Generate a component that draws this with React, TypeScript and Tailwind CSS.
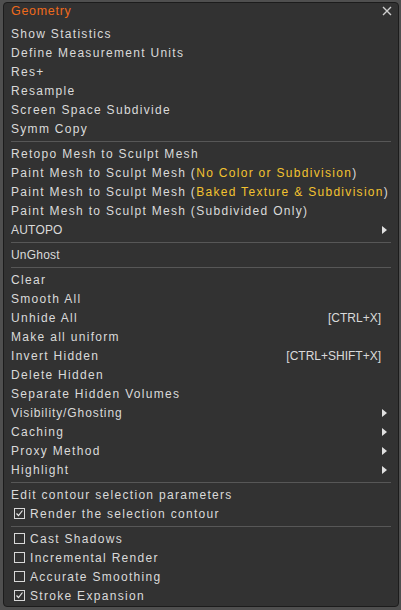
import React from "react";

type Item =
  | { kind: "sep" }
  | {
      kind: "item";
      label: React.ReactNode;
      shortcut?: string;
      sub?: boolean;
      check?: boolean;
      track?: string;
    };

const Y = ({ children }: { children: React.ReactNode }) => <span className="text-[#f2c230]">{children}</span>;

const ITEMS: Item[] = [
  { kind: "item", label: "Show Statistics" },
  { kind: "item", label: "Define Measurement Units" },
  { kind: "item", label: "Res+" },
  { kind: "item", label: "Resample" },
  { kind: "item", label: "Screen Space Subdivide" },
  { kind: "item", label: "Symm Copy" },
  { kind: "sep" },
  { kind: "item", label: "Retopo Mesh to Sculpt Mesh" },
  { kind: "item", label: <>Paint Mesh to Sculpt Mesh (<Y>No Color or Subdivision</Y>)</> },
  { kind: "item", label: <>Paint Mesh to Sculpt Mesh (<Y>Baked Texture &amp; Subdivision</Y>)</> },
  { kind: "item", label: "Paint Mesh to Sculpt Mesh (Subdivided Only)" },
  { kind: "item", label: "AUTOPO", sub: true, track: "tracking-[0.2px]" },
  { kind: "sep" },
  { kind: "item", label: "UnGhost", track: "tracking-[0.2px]" },
  { kind: "sep" },
  { kind: "item", label: "Clear" },
  { kind: "item", label: "Smooth All" },
  { kind: "item", label: "Unhide All", shortcut: "[CTRL+X]" },
  { kind: "item", label: "Make all uniform" },
  { kind: "item", label: "Invert Hidden", shortcut: "[CTRL+SHIFT+X]" },
  { kind: "item", label: "Delete Hidden" },
  { kind: "item", label: "Separate Hidden Volumes" },
  { kind: "item", label: "Visibility/Ghosting", sub: true, track: "tracking-[0.9px]" },
  { kind: "item", label: "Caching", sub: true },
  { kind: "item", label: "Proxy Method", sub: true },
  { kind: "item", label: "Highlight", sub: true },
  { kind: "sep" },
  { kind: "item", label: "Edit contour selection parameters" },
  { kind: "item", label: "Render the selection contour", check: true },
  { kind: "sep" },
  { kind: "item", label: "Cast Shadows", check: false },
  { kind: "item", label: "Incremental Render", check: false },
  { kind: "item", label: "Accurate Smoothing", check: false },
  { kind: "item", label: "Stroke Expansion", check: true },
];

function Box({ on }: { on: boolean }) {
  return (
    <span className="mr-[5px] flex h-[11px] w-[11px] shrink-0 items-center justify-center border border-[#d8d8d8]">
      {on && (
        <svg width="9" height="9" viewBox="0 0 9 9">
          <path d="M1.5 4.5 L3.5 6.5 L7.5 1.5" fill="none" stroke="#e6e6e6" strokeWidth="1.2" />
        </svg>
      )}
    </span>
  );
}

export default function App() {
  return (
    <div className="h-[610px] w-[401px] bg-[#4f4f4f] pl-[3px] pt-[2px]" style={{ fontFamily: '"Liberation Sans", Arial, sans-serif' }}>
      <div className="h-[605px] w-[396px] rounded-[4px] border border-[#1c1c1c] bg-[#323232]">
        <div className="flex h-[16px] items-center justify-between pl-[7px] pr-[6px]">
          <span className="text-[12.5px] tracking-[0.7px] text-[#ee6a1c]">Geometry</span>
          <svg width="10" height="10" viewBox="0 0 10 10">
            <path d="M1 1 L9 9 M9 1 L1 9" stroke="#cfcfcf" strokeWidth="1.4" />
          </svg>
        </div>
        <div className="pt-[5px]">
          {ITEMS.map((it, i) =>
            it.kind === "sep" ? (
              <div key={i} className="pb-[2px] pl-[7px] pr-[7px] pt-[3px]">
                <div className="h-[1px] bg-[#575757]" />
              </div>
            ) : (
              <div
                key={i}
                className={`flex h-[19px] items-center pl-[7px] pr-[10px] text-[12px] text-[#dadada] ${it.track ?? "tracking-[1.3px]"}`}
              >
                {it.check !== undefined && <span className="ml-[3px]"><Box on={it.check} /></span>}
                <span className="whitespace-nowrap">{it.label}</span>
                <span className="flex-1" />
                {it.shortcut && <span className="mr-[7px] tracking-normal">{it.shortcut}</span>}
                {it.sub && (
                  <svg width="5" height="8" viewBox="0 0 5 8" className="mr-[1px]">
                    <path d="M0 0 L5 4 L0 8 Z" fill="#e0e0e0" />
                  </svg>
                )}
              </div>
            )
          )}
        </div>
      </div>
    </div>
  );
}
